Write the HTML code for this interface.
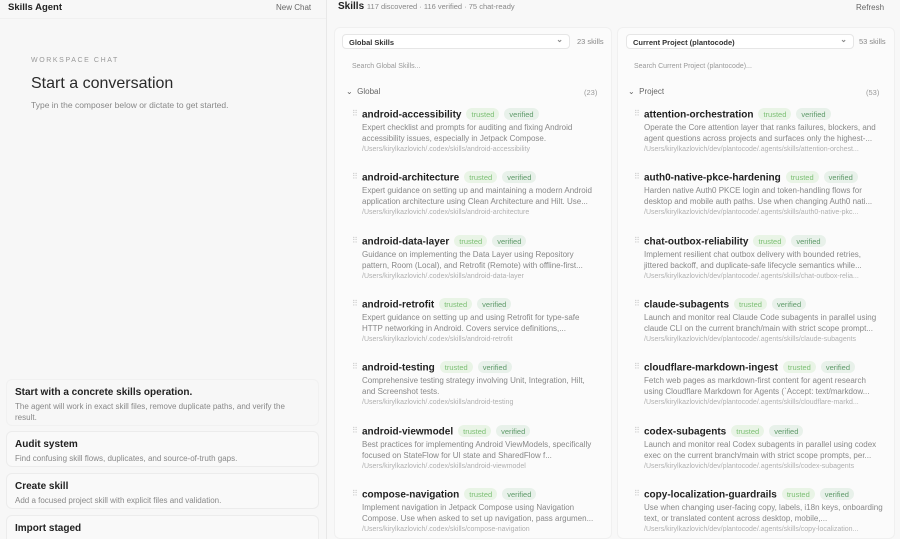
<!DOCTYPE html>
<html><head><meta charset="utf-8"><style>
*{margin:0;padding:0;box-sizing:border-box}
html,body{width:900px;height:539px;overflow:hidden}
body{background:#f8f8f8;font-family:"Liberation Sans",sans-serif;color:#222;position:relative}
.a{position:absolute;white-space:nowrap}
#left{position:absolute;left:0;top:0;width:327px;height:539px;background:#f7f7f7;border-right:1px solid #e8e8e8}
.card{position:absolute;left:6px;width:313px;border:1px solid #ececec;border-radius:6px;background:#f9f9f9}
.card b{position:absolute;left:8px;top:7px;font-size:10px;font-weight:600;color:#222}
.card span{position:absolute;left:8px;top:21px;font-size:8px;color:#888;line-height:11px;white-space:normal;width:290px}
.col{position:absolute;top:27px;height:520px;background:#fbfbfb;border:1px solid #f0f0f0;border-radius:6px}
.dd{position:absolute;height:15px;border:1px solid #e6e6e6;border-radius:4px;background:#fff;font-size:7.5px;font-weight:600;padding:3px 6px;color:#333}
.dd:after{content:"⌄";position:absolute;right:6px;top:0;font-size:8px;color:#888}
.it{position:absolute}
.it .h{position:absolute;left:-10px;top:1px;font-size:8px;color:#ccc;letter-spacing:-1px}
.it .n{position:absolute;left:0;top:0;font-size:10px;font-weight:600;color:#222;white-space:nowrap}
.tg{display:inline-block;font-size:7.5px;font-weight:400;padding:1.5px 5px;border-radius:7px;margin-left:5px;vertical-align:1px}
.t1{background:#e9f4e6;color:#7cbf74}.t2{background:#e8f1ea;color:#5f9a6a}
.it .d{position:absolute;left:0;top:15px;font-size:8px;line-height:10.5px;color:#888;width:240px;white-space:normal}
.it .p{position:absolute;left:0;top:38px;font-size:7px;color:#b0b0b0;white-space:nowrap}
</style></head><body>
<div id="left">
<div class="a" style="left:8px;top:2px;font-size:9.5px;font-weight:700">Skills Agent</div>
<div class="a" style="left:276px;top:3px;font-size:8px;color:#666">New Chat</div>
<div style="position:absolute;left:0;top:18px;width:326px;border-top:1px solid #f0f0f0"></div>
<div class="a" style="left:31px;top:57px;font-size:7px;letter-spacing:1.6px;color:#999">WORKSPACE CHAT</div>
<div class="a" style="left:31px;top:75px;font-size:16px;color:#2a2a2a">Start a conversation</div>
<div class="a" style="left:31px;top:100px;font-size:8.5px;color:#888">Type in the composer below or dictate to get started.</div>
<div class="card" style="top:379px;height:47px;border-color:#f1f1f1;background:#f7f7f7"><b>Start with a concrete skills operation.</b><span>The agent will work in exact skill files, remove duplicate paths, and verify the result.</span></div>
<div class="card" style="top:431px;height:36px"><b>Audit system</b><span>Find confusing skill flows, duplicates, and source-of-truth gaps.</span></div>
<div class="card" style="top:473px;height:36px"><b>Create skill</b><span>Add a focused project skill with explicit files and validation.</span></div>
<div class="card" style="top:515px;height:36px"><b>Import staged</b><span>Review and import staged skills before they go live in the system.</span></div>
</div>
<div class="a" style="left:338px;top:1px;font-size:10px;font-weight:700">Skills <span style="font-weight:400;font-size:7.5px;color:#888">117 discovered · 116 verified · 75 chat-ready</span></div>
<div class="a" style="left:856px;top:3px;font-size:8px;color:#666">Refresh</div>
<div class="col" style="left:334px;width:278px;height:512px"></div>
<div class="col" style="left:617px;width:278px;height:512px"></div>
<div class="dd" style="left:342px;top:34px;width:228px">Global Skills</div>
<div class="a" style="left:577px;top:37px;font-size:7.5px;color:#888">23 skills</div>
<div class="a" style="left:352px;top:63px;font-size:7px;color:#999">Search Global Skills...</div>
<div class="a" style="left:346px;top:87px;font-size:8px;color:#666">⌄ &nbsp;Global</div>
<div class="a" style="left:584px;top:88px;font-size:7.5px;color:#999">(23)</div>
<div class="dd" style="left:626px;top:34px;width:228px">Current Project (plantocode)</div>
<div class="a" style="left:859px;top:37px;font-size:7.5px;color:#888">53 skills</div>
<div class="a" style="left:634px;top:63px;font-size:7px;color:#999">Search Current Project (plantocode)...</div>
<div class="a" style="left:628px;top:87px;font-size:8px;color:#666">⌄ &nbsp;Project</div>
<div class="a" style="left:866px;top:88px;font-size:7.5px;color:#999">(53)</div>

<div class="it" style="left:362px;top:108px"><div class="h">⠿</div><div class="n">android-accessibility<span class="tg t1">trusted</span><span class="tg t2">verified</span></div><div class="d">Expert checklist and prompts for auditing and fixing Android accessibility issues, especially in Jetpack Compose.</div><div class="p">/Users/kirylkazlovich/.codex/skills/android-accessibility</div></div>
<div class="it" style="left:362px;top:171px"><div class="h">⠿</div><div class="n">android-architecture<span class="tg t1">trusted</span><span class="tg t2">verified</span></div><div class="d">Expert guidance on setting up and maintaining a modern Android application architecture using Clean Architecture and Hilt. Use...</div><div class="p">/Users/kirylkazlovich/.codex/skills/android-architecture</div></div>
<div class="it" style="left:362px;top:235px"><div class="h">⠿</div><div class="n">android-data-layer<span class="tg t1">trusted</span><span class="tg t2">verified</span></div><div class="d">Guidance on implementing the Data Layer using Repository pattern, Room (Local), and Retrofit (Remote) with offline-first...</div><div class="p">/Users/kirylkazlovich/.codex/skills/android-data-layer</div></div>
<div class="it" style="left:362px;top:298px"><div class="h">⠿</div><div class="n">android-retrofit<span class="tg t1">trusted</span><span class="tg t2">verified</span></div><div class="d">Expert guidance on setting up and using Retrofit for type-safe HTTP networking in Android. Covers service definitions,...</div><div class="p">/Users/kirylkazlovich/.codex/skills/android-retrofit</div></div>
<div class="it" style="left:362px;top:361px"><div class="h">⠿</div><div class="n">android-testing<span class="tg t1">trusted</span><span class="tg t2">verified</span></div><div class="d" style="width:230px">Comprehensive testing strategy involving Unit, Integration, Hilt, and Screenshot tests.</div><div class="p">/Users/kirylkazlovich/.codex/skills/android-testing</div></div>
<div class="it" style="left:362px;top:425px"><div class="h">⠿</div><div class="n">android-viewmodel<span class="tg t1">trusted</span><span class="tg t2">verified</span></div><div class="d">Best practices for implementing Android ViewModels, specifically focused on StateFlow for UI state and SharedFlow f...</div><div class="p">/Users/kirylkazlovich/.codex/skills/android-viewmodel</div></div>
<div class="it" style="left:362px;top:488px"><div class="h">⠿</div><div class="n">compose-navigation<span class="tg t1">trusted</span><span class="tg t2">verified</span></div><div class="d">Implement navigation in Jetpack Compose using Navigation Compose. Use when asked to set up navigation, pass argumen...</div><div class="p">/Users/kirylkazlovich/.codex/skills/compose-navigation</div></div>

<div class="it" style="left:644px;top:108px"><div class="h">⠿</div><div class="n">attention-orchestration<span class="tg t1">trusted</span><span class="tg t2">verified</span></div><div class="d">Operate the Core attention layer that ranks failures, blockers, and agent questions across projects and surfaces only the highest-...</div><div class="p">/Users/kirylkazlovich/dev/plantocode/.agents/skills/attention-orchest...</div></div>
<div class="it" style="left:644px;top:171px"><div class="h">⠿</div><div class="n">auth0-native-pkce-hardening<span class="tg t1">trusted</span><span class="tg t2">verified</span></div><div class="d">Harden native Auth0 PKCE login and token-handling flows for desktop and mobile auth paths. Use when changing Auth0 nati...</div><div class="p">/Users/kirylkazlovich/dev/plantocode/.agents/skills/auth0-native-pkc...</div></div>
<div class="it" style="left:644px;top:235px"><div class="h">⠿</div><div class="n">chat-outbox-reliability<span class="tg t1">trusted</span><span class="tg t2">verified</span></div><div class="d">Implement resilient chat outbox delivery with bounded retries, jittered backoff, and duplicate-safe lifecycle semantics while...</div><div class="p">/Users/kirylkazlovich/dev/plantocode/.agents/skills/chat-outbox-relia...</div></div>
<div class="it" style="left:644px;top:298px"><div class="h">⠿</div><div class="n">claude-subagents<span class="tg t1">trusted</span><span class="tg t2">verified</span></div><div class="d">Launch and monitor real Claude Code subagents in parallel using claude CLI on the current branch/main with strict scope prompt...</div><div class="p">/Users/kirylkazlovich/dev/plantocode/.agents/skills/claude-subagents</div></div>
<div class="it" style="left:644px;top:361px"><div class="h">⠿</div><div class="n">cloudflare-markdown-ingest<span class="tg t1">trusted</span><span class="tg t2">verified</span></div><div class="d">Fetch web pages as markdown-first content for agent research using Cloudflare Markdown for Agents (`Accept: text/markdow...</div><div class="p">/Users/kirylkazlovich/dev/plantocode/.agents/skills/cloudflare-markd...</div></div>
<div class="it" style="left:644px;top:425px"><div class="h">⠿</div><div class="n">codex-subagents<span class="tg t1">trusted</span><span class="tg t2">verified</span></div><div class="d">Launch and monitor real Codex subagents in parallel using codex exec on the current branch/main with strict scope prompts, per...</div><div class="p">/Users/kirylkazlovich/dev/plantocode/.agents/skills/codex-subagents</div></div>
<div class="it" style="left:644px;top:488px"><div class="h">⠿</div><div class="n">copy-localization-guardrails<span class="tg t1">trusted</span><span class="tg t2">verified</span></div><div class="d">Use when changing user-facing copy, labels, i18n keys, onboarding text, or translated content across desktop, mobile,...</div><div class="p">/Users/kirylkazlovich/dev/plantocode/.agents/skills/copy-localization...</div></div>
</body></html>
